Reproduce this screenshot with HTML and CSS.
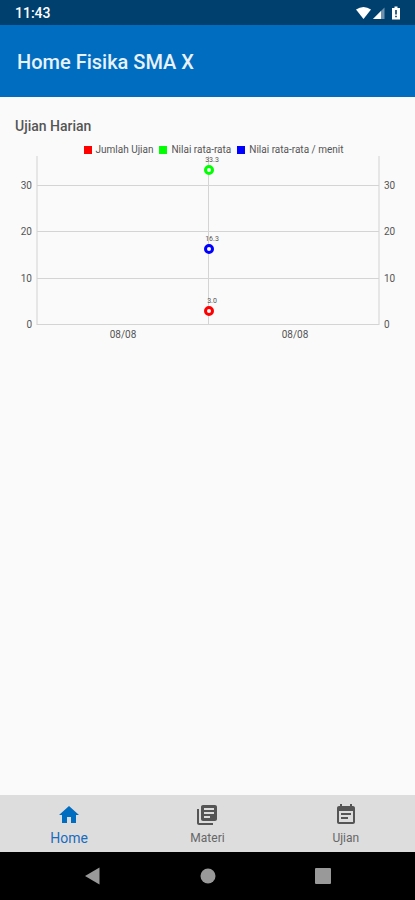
FILE: index.html
```html
<!DOCTYPE html>
<html lang="id">
<head>
<meta charset="utf-8">
<meta name="viewport" content="width=device-width, initial-scale=1">
<title>Home Fisika SMA X</title>
<link rel="stylesheet" href="styles.css">
</head>
<body>
<div class="status">
  <span>11:43</span>
  <svg class="status-icons" viewBox="0 0 48 16" width="48" height="16" aria-hidden="true">
    <path fill="#fff" d="M1 4.500Q8.500-.5 16 4.500L8.500 14Z"/>
    <path fill="#6f93ae" d="M18 14 29.500 2.500V14Z"/>
    <path fill="#fff" d="M18 14 26 6V14Z"/>
    <path fill="#fff" d="M39.500 1.500h3V3H45v11.500h-8V3h2.500z"/>
    <path fill="#00406f" d="M40.200 5h1.600v4.500h-1.600zM40.200 10.700h1.600v1.500h-1.600z"/>
  </svg>
</div>
<header class="appbar"><h1>Home Fisika SMA X</h1></header>
<main class="content">
  <h2>Ujian Harian</h2>
  <ul class="legend">
    <li><span class="swatch red"></span>Jumlah Ujian</li>
    <li><span class="swatch green"></span>Nilai rata-rata</li>
    <li><span class="swatch blue"></span>Nilai rata-rata / menit</li>
  </ul>
  <svg class="chart" viewBox="0 0 415 190" role="img" aria-label="Ujian Harian">
    <g class="grid">
      <path class="axis" d="M37 0V169M379 0V169"/>
      <path d="M37 29.500H379M37 75.500H379M37 122.500H379M37 168.500H379M208.500 0V169"/>
    </g>
    <g class="ticks left">
      <text x="32" y="33">30</text><text x="32" y="79">20</text><text x="32" y="126">10</text><text x="32" y="172">0</text>
    </g>
    <g class="ticks">
      <text x="384" y="33">30</text><text x="384" y="79">20</text><text x="384" y="126">10</text><text x="384" y="172">0</text>
    </g>
    <g class="ticks dates"><text x="123" y="182">08/08</text><text x="295" y="182">08/08</text></g>
    <g class="points">
      <circle cx="209" cy="14" r="3.500" stroke="#00ff00"/>
      <circle cx="209" cy="93" r="3.500" stroke="#0000ff"/>
      <circle cx="209" cy="155" r="3.500" stroke="#ff0000"/>
    </g>
    <g class="values"><text x="212" y="6">33.3</text><text x="212" y="85">16.3</text><text x="212" y="147">3.0</text></g>
  </svg>
</main>
<nav class="tabs">
  <a class="active" href="#home">
    <svg viewBox="0 0 24 24" aria-hidden="true"><path d="M10 20v-6h4v6h5v-8h3L12 3 2 12h3v8z"/></svg>
    <span>Home</span>
  </a>
  <a href="#materi">
    <svg viewBox="0 0 24 24" aria-hidden="true"><path d="M4 6H2v14c0 1.100.9 2 2 2h14v-2H4V6zm16-4H8c-1.100 0-2 .9-2 2v12c0 1.100.9 2 2 2h12c1.100 0 2-.9 2-2V4c0-1.100-.9-2-2-2zm-1 9H9V9h10v2zm-4 4H9v-2h6v2zm4-8H9V5h10v2z"/></svg>
    <span>Materi</span>
  </a>
  <a href="#ujian">
    <svg viewBox="0 0 24 24" aria-hidden="true"><path d="M17 10H7v2h10v-2zm2-7h-1V1h-2v2H8V1H6v2H5c-1.110 0-1.990.9-1.990 2L3 19c0 1.100.89 2 2 2h14c1.100 0 2-.9 2-2V5c0-1.100-.9-2-2-2zm0 16H5V8h14v11zm-5-5H7v2h7v-2z"/></svg>
    <span>Ujian</span>
  </a>
</nav>
<div class="system">
  <button type="button" aria-label="Back"><svg viewBox="0 0 16 18"><path d="M0 9 14.500.5v17z"/></svg></button>
  <button type="button" aria-label="Home"><svg viewBox="0 0 16 18"><circle cx="8" cy="9" r="7.500"/></svg></button>
  <button type="button" aria-label="Recent apps"><svg viewBox="0 0 16 18"><rect y="1" width="16" height="16" rx="1"/></svg></button>
</div>
</body>
</html>
```
FILE: styles.css
```css
* { box-sizing: border-box; }
body {
  margin: 0;
  min-height: 100vh;
  display: flex;
  flex-direction: column;
  background: #fafafa;
  color: #555;
  font-family: Roboto, "Liberation Sans", sans-serif;
}
h1, h2, ul { margin: 0; padding: 0; }
.status {
  height: 25px;
  padding: 0 12px 0 15px;
  display: flex;
  align-items: center;
  justify-content: space-between;
  background: #00406f;
  color: #fff;
  font-size: 14px;
  font-weight: 500;
}
.appbar {
  height: 72px;
  padding: 2px 17px 0;
  display: flex;
  align-items: center;
  background: #006dc0;
  color: #e8f2fa;
}
.appbar h1 { font-size: 20px; font-weight: 500; }
.content { flex: 1; padding-top: 20px; }
.content h2 {
  padding: 0 15px;
  font-size: 14px;
  line-height: 18px;
  font-weight: 500;
}
.legend {
  margin-top: 9px;
  display: flex;
  justify-content: center;
  gap: 6px;
  padding-left: 12px;
  list-style: none;
  font-size: 10px;
  line-height: 12px;
}
.legend li { display: flex; align-items: center; gap: 4px; }
.swatch { width: 8px; height: 8px; }
.red { background: #f00; }
.green { background: #0f0; }
.blue { background: #00f; }
.chart { display: block; width: 100%; overflow: visible; }
.grid path { fill: none; stroke: #d4d4d4; stroke-width: 1; }
.grid .axis { stroke: #e6e6e6; stroke-width: 2; }
.ticks { fill: #555; font-size: 10px; }
.left { text-anchor: end; }
.dates { text-anchor: middle; }
.points circle { fill: #fff; stroke-width: 3; }
.values { fill: #555; font-size: 7px; text-anchor: middle; }
.tabs { height: 57px; display: flex; background: #ddd; }
.tabs a {
  flex: 1;
  padding-top: 8px;
  display: flex;
  flex-direction: column;
  align-items: center;
  gap: 3px;
  color: #666;
  font-size: 12px;
  line-height: 16px;
  text-decoration: none;
}
.tabs svg { width: 24px; height: 24px; fill: #555; }
.tabs .active { color: #1a6bbd; font-size: 14px; }
.tabs .active svg { fill: #006dc0; }
.system {
  height: 48px;
  padding: 0 35px;
  display: flex;
  align-items: center;
  background: #000;
}
.system button {
  flex: 1;
  height: 48px;
  padding: 0;
  border: 0;
  display: flex;
  align-items: center;
  justify-content: center;
  background: none;
}
.system svg { width: 16px; height: 18px; fill: #999; }
```
